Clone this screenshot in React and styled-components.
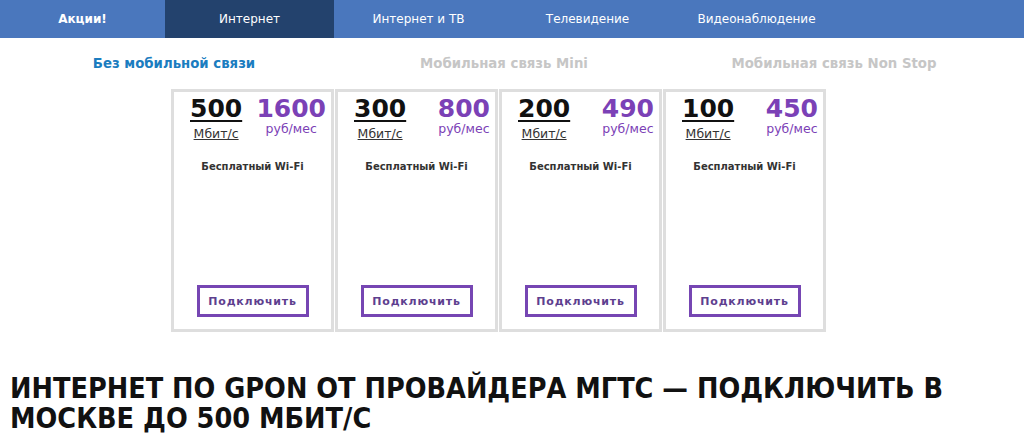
import React from "react";
import styled, { createGlobalStyle } from "styled-components";

const GlobalStyle = createGlobalStyle`
  html, body {
    margin: 0;
    padding: 0;
    background: #ffffff;
  }
  body {
    font-family: "DejaVu Sans", Verdana, sans-serif;
    color: #222;
  }
`;

const Page = styled.div`
  width: 1024px;
  height: 448px;
  overflow: hidden;
`;

const Nav = styled.nav`
  display: flex;
  height: 38px;
  background: #4a77bd;
`;

const NavItem = styled.div`
  width: ${(p) => p.w || 169}px;
  display: flex;
  align-items: center;
  justify-content: center;
  font-size: 12px;
  font-weight: ${(p) => (p.bold ? 700 : 400)};
  color: #ffffff;
  background: ${(p) => (p.active ? "#23426d" : "transparent")};
`;

const SubTabs = styled.div`
  display: grid;
  grid-template-columns: repeat(3, 330px);
  padding: 18px 0 0 9px;
  height: 33px;
  box-sizing: content-box;
`;

const SubTab = styled.div`
  text-align: center;
  font-size: 13.3px;
  font-weight: 700;
  color: ${(p) => (p.active ? "#1b7dc0" : "#c6c6c6")};
`;

const Cards = styled.div`
  display: flex;
  gap: 1px;
  margin-left: 171px;
`;

const Card = styled.div`
  width: 157px;
  height: 237px;
  border: 3px solid #dedede;
  display: flex;
  flex-direction: column;
  align-items: center;
  background: #fff;
`;

const PriceRow = styled.div`
  align-self: stretch;
  display: flex;
  justify-content: space-between;
  padding: 3px 5px 0 16px;
`;

const Col = styled.div`
  display: flex;
  flex-direction: column;
  align-items: center;
`;

const Big = styled.div`
  font-size: 25px;
  font-weight: 700;
  line-height: 28px;
  color: ${(p) => (p.purple ? "#7b41b6" : "#111")};
  text-decoration: ${(p) => (p.purple ? "none" : "underline")};
  text-decoration-thickness: 2px;
  text-underline-offset: 3px;
`;

const Unit = styled.div`
  font-size: 12.5px;
  line-height: 16px;
  margin-top: ${(p) => (p.purple ? "-2px" : "3px")};
  color: ${(p) => (p.purple ? "#7b41b6" : "#333")};
  text-decoration: ${(p) => (p.purple ? "none" : "underline")};
`;

const Feature = styled.div`
  margin-top: 19px;
  font-size: 10px;
  font-weight: 700;
  color: #333;
`;

const Button = styled.div`
  margin-top: auto;
  margin-bottom: 12px;
  width: 106px;
  height: 26px;
  border: 3px solid #7646b3;
  display: flex;
  align-items: center;
  justify-content: center;
  font-size: 11px;
  font-weight: 700;
  letter-spacing: 0.8px;
  color: #5e3f8f;
`;

const Heading = styled.h1`
  margin: 42px 0 0 10px;
  width: 990px;
  font-family: "DejaVu Sans Condensed", "Liberation Sans Narrow", sans-serif;
  font-stretch: condensed;
  font-size: 28.5px;
  line-height: 30px;
  font-weight: 700;
  color: #111;
`;

const tabs = [
  { label: "Акции!", bold: true, w: 165 },
  { label: "Интернет", active: true },
  { label: "Интернет и ТВ" },
  { label: "Телевидение" },
  { label: "Видеонаблюдение" },
];

const plans = [
  { speed: "500", price: "1600" },
  { speed: "300", price: "800" },
  { speed: "200", price: "490" },
  { speed: "100", price: "450" },
];

export default function App() {
  return (
    <Page>
      <GlobalStyle />
      <Nav>
        {tabs.map((t) => (
          <NavItem key={t.label} bold={t.bold} active={t.active} w={t.w}>
            {t.label}
          </NavItem>
        ))}
      </Nav>
      <SubTabs>
        <SubTab active>Без мобильной связи</SubTab>
        <SubTab>Мобильная связь Mini</SubTab>
        <SubTab>Мобильная связь Non Stop</SubTab>
      </SubTabs>
      <Cards>
        {plans.map((p) => (
          <Card key={p.speed}>
            <PriceRow>
              <Col>
                <Big>{p.speed}</Big>
                <Unit>Мбит/с</Unit>
              </Col>
              <Col>
                <Big purple>{p.price}</Big>
                <Unit purple>руб/мес</Unit>
              </Col>
            </PriceRow>
            <Feature>Бесплатный Wi-Fi</Feature>
            <Button>Подключить</Button>
          </Card>
        ))}
      </Cards>
      <Heading>
        ИНТЕРНЕТ ПО GPON ОТ ПРОВАЙДЕРА МГТС — ПОДКЛЮЧИТЬ В МОСКВЕ ДО 500 МБИТ/С
      </Heading>
    </Page>
  );
}
